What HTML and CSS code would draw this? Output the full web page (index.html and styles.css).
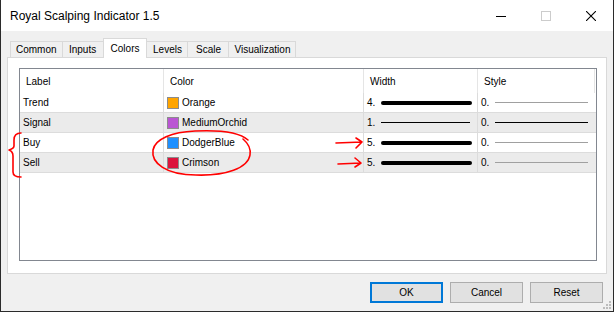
FILE: index.html
```html
<!DOCTYPE html>
<html lang="en">
  <head>
    <meta charset="UTF-8" />
    <title>Royal Scalping Indicator 1.5</title>
    <link rel="stylesheet" href="styles.css">
  </head>
  <body>
    <div class="window">
      <div class="titlebar">
        <span class="title">Royal Scalping Indicator 1.5</span>
        <div class="controls">
          <span class="ctl">
            <svg width="10" height="10" viewBox="0 0 10 10"><path d="M0 5.5h10" stroke="#000" /></svg>
          </span>
          <span class="ctl">
            <svg width="10" height="10" viewBox="0 0 10 10"><rect x="0.5" y="0.5" width="9" height="9" fill="none" stroke="#cccccc" /></svg>
          </span>
          <span class="ctl">
            <svg width="10" height="10" viewBox="0 0 10 10"><path d="M0 0L10 10M10 0L0 10" stroke="#000" stroke-width="1.1" /></svg>
          </span>
        </div>
      </div>

      <div class="content">
        <div class="tabs">
          <div class="tab">Common</div>
          <div class="tab">Inputs</div>
          <div class="tab active">Colors</div>
          <div class="tab">Levels</div>
          <div class="tab">Scale</div>
          <div class="tab">Visualization</div>
        </div>

        <div class="panel">
          <div class="list">
            <div class="row head">
              <div class="cell">Label</div>
              <div class="cell">Color</div>
              <div class="cell">Width</div>
              <div class="cell">Style</div>
              <div class="cell end"></div>
            </div>

            <div class="row">
              <div class="cell">Trend</div>
              <div class="cell"><span class="swatch orange"></span>Orange</div>
              <div class="cell">4.<span class="wline"></span></div>
              <div class="cell end">0.<span class="sline"></span></div>
              <div class="cell end"></div>
            </div>

            <div class="row alt">
              <div class="cell">Signal</div>
              <div class="cell"><span class="swatch orchid"></span>MediumOrchid</div>
              <div class="cell">1.<span class="wline thin"></span></div>
              <div class="cell end">0.<span class="sline dark"></span></div>
              <div class="cell end"></div>
            </div>

            <div class="row">
              <div class="cell">Buy</div>
              <div class="cell"><span class="swatch blue"></span>DodgerBlue</div>
              <div class="cell">5.<span class="wline"></span></div>
              <div class="cell end">0.<span class="sline"></span></div>
              <div class="cell end"></div>
            </div>

            <div class="row alt">
              <div class="cell">Sell</div>
              <div class="cell"><span class="swatch crimson"></span>Crimson</div>
              <div class="cell">5.<span class="wline"></span></div>
              <div class="cell end">0.<span class="sline"></span></div>
              <div class="cell end"></div>
            </div>
          </div>
        </div>

        <div class="buttons">
          <button class="btn default">OK</button>
          <button class="btn">Cancel</button>
          <button class="btn">Reset</button>
        </div>
      </div>

      <svg class="grip" width="9" height="9" viewBox="0 0 9 9">
        <rect x="6" y="0" width="2" height="2" />
        <rect x="3" y="3" width="2" height="2" />
        <rect x="6" y="3" width="2" height="2" />
        <rect x="0" y="6" width="2" height="2" />
        <rect x="3" y="6" width="2" height="2" />
        <rect x="6" y="6" width="2" height="2" />
      </svg>
    </div>

    <!-- hand drawn red marks on top of the screenshot -->
    <svg class="marks" width="615" height="312" viewBox="0 0 615 312">
      <path d="M21 133C16 133 14 136 14 140L14 146C14 148 12 149 9 150C12 151 13 153 13 156L13 172C13 175 16 177 21 177" />
      <path d="M248 140C238 131 216 130 195 131C172 132 155 139 153 150C151 163 166 175 196 175C226 176 248 168 250 155C251 149 249 144 243 139" />
      <path d="M336 143L362 142M356 138L362 142L356 148" />
      <path d="M338 164L361 163M355 158L361 163L355 167" />
    </svg>
  </body>
</html>
```

FILE: styles.css
```css
* {
  margin: 0;
  padding: 0;
  box-sizing: border-box;
}

body {
  font-family: "Liberation Sans", Arial, sans-serif;
  font-size: 10px;
  color: #000;
  background-color: #fff;
  width: 615px;
  height: 312px;
  position: relative;
  overflow: hidden;
}

.window {
  width: 614px;
  height: 312px;
  border: 1px solid #2b2b2b;
  border-top: none;
  background-color: #f0f0f0;
  display: flex;
  flex-direction: column;
  position: relative;
}

.titlebar {
  height: 31px;
  flex-shrink: 0;
  background-color: #fff;
  display: flex;
  align-items: center;
}

.title {
  flex: 1;
  padding-left: 9px;
  font-size: 12px;
}

.controls {
  display: flex;
  align-self: stretch;
}

.ctl {
  width: 45px;
  display: flex;
  align-items: center;
  justify-content: center;
}

.ctl svg {
  display: block;
}

.content {
  flex: 1;
  padding: 7px 6px 0;
  display: flex;
  flex-direction: column;
}

.tabs {
  height: 19px;
  padding-left: 3px;
  display: flex;
  align-items: flex-end;
}

.tab {
  height: 16px;
  min-width: 42px;
  padding: 0 5px;
  margin-right: -1px;
  border: 1px solid #d9d9d9;
  border-bottom: none;
  background-color: #f0f0f0;
  display: flex;
  align-items: center;
  justify-content: center;
}

.tab.active {
  height: 20px;
  margin-bottom: -1px;
  padding: 0 7px;
  background-color: #fff;
  position: relative;
  z-index: 1;
}

.panel {
  height: 217px;
  border: 1px solid #d9d9d9;
  background-color: #fff;
  padding: 10px 9px 12px 11px;
  display: flex;
  flex-direction: column;
}

.list {
  flex: 1;
  border: 1px solid #828790;
  background-color: #fff;
}

.row {
  height: 20px;
  display: grid;
  grid-template-columns: 144px 200px 114px 117px 1fr;
  border-bottom: 1px solid #dcdcdc;
}

.row.alt {
  background-color: #ebebeb;
}

.row.head {
  height: 24px;
  border-bottom: none;
}

.cell {
  padding-left: 3px;
  border-right: 1px solid #dcdcdc;
  display: flex;
  align-items: center;
  white-space: nowrap;
  overflow: hidden;
}

.cell.end {
  border-right: none;
}

.head .cell {
  padding-left: 6px;
  border-right: 1px solid #e5e5e5;
}

.head .cell.end {
  border-right: none;
}

.swatch {
  width: 12px;
  height: 12px;
  margin-right: 3px;
  border: 1px solid #8c8c8c;
}

.swatch.orange {
  background-color: #ffa500;
}

.swatch.orchid {
  background-color: #ba55d3;
}

.swatch.blue {
  background-color: #1e90ff;
}

.swatch.crimson {
  background-color: #dc143c;
}

.wline {
  flex: 1;
  height: 4px;
  margin: 0 5px 0 6px;
  border-radius: 2px;
  background-color: #000;
}

.wline.thin {
  height: 1px;
  margin-right: 7px;
  border-radius: 0;
}

.sline {
  flex: 1;
  height: 1px;
  margin: 0 7px 0 6px;
  background-color: #a0a0a0;
}

.sline.dark {
  background-color: #000;
}

.buttons {
  margin-top: 8px;
  padding-right: 4px;
  display: flex;
  justify-content: flex-end;
  gap: 7px;
}

.btn {
  width: 73px;
  height: 21px;
  border: 1px solid #adadad;
  background-color: #e1e1e1;
  font-family: inherit;
  font-size: 10px;
  color: #000;
  display: flex;
  align-items: center;
  justify-content: center;
}

.btn.default {
  border: 2px solid #0078d7;
}

.grip {
  position: absolute;
  right: 1px;
  bottom: 1px;
  fill: #bcbcbc;
}

.marks {
  position: absolute;
  left: 0;
  top: 0;
  pointer-events: none;
  fill: none;
  stroke: #f00;
  stroke-width: 1.6;
  stroke-linecap: round;
  stroke-linejoin: round;
}
```
